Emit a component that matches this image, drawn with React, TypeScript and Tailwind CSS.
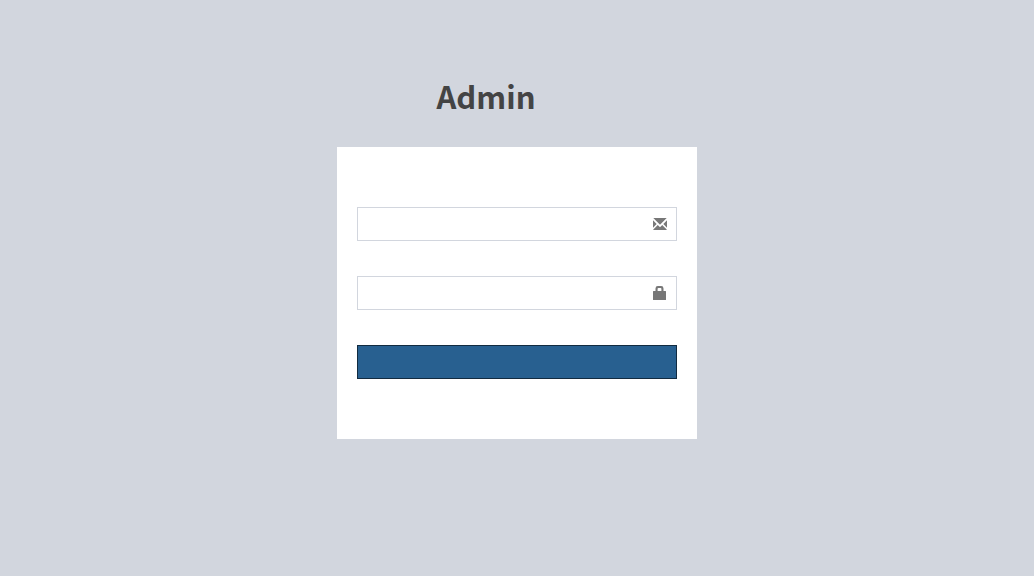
export default function App() {
  return (
    <main className="min-h-screen overflow-hidden bg-[#d2d6de] pt-[71px] font-['Noto_Sans_CJK_SC','Noto_Sans',sans-serif] text-[#444444]">
      <div className="mx-auto w-[360px] max-w-full">
        <h1 className="mb-[27px] w-[298px] text-center text-[31px] leading-[49px] font-bold">Admin</h1>
        <form className="bg-white px-5 py-[60px]" onSubmit={(e) => e.preventDefault()}>
          <div className="relative mb-[35px]">
            <input type="email" aria-label="Email" className="block h-[34px] w-full border border-[#d2d6de] bg-white pr-11 pl-3 text-sm outline-none" />
            <svg aria-hidden="true" viewBox="0 0 14 12" className="pointer-events-none absolute top-[11px] right-[10px] h-3 w-[14px] fill-[#777777]">
              <path d="M.3 0h13.4L7 6.7zM0 2.3 3.7 6 0 9.7zM14 2.3v7.4L10.3 6zM4.8 7.1 7 9.3l2.2-2.2 4.5 4.5V12H.3v-.4z" />
            </svg>
          </div>
          <div className="relative mb-[35px]">
            <input type="password" aria-label="Password" className="block h-[34px] w-full border border-[#d2d6de] bg-white pr-11 pl-3 text-sm outline-none" />
            <svg aria-hidden="true" viewBox="0 0 14 14" className="pointer-events-none absolute top-[10px] right-[10px] size-[14px] fill-[#777777]">
              <path fillRule="evenodd" d="M.5 5h2V2.4Q2.5 0 4.9 0h3.2q2.4 0 2.4 2.4V5h2q.5 0 .5.5v8q0 .5-.5.5H.5q-.5 0-.5-.5v-8Q0 5 .5 5M4.6 5h3.8V2.8Q8.4 2 7.6 2H5.4q-.8 0-.8.8z" />
            </svg>
          </div>
          <button type="submit" aria-label="Sign in" className="block h-[34px] w-full border border-[#122b40] bg-[#286090]" />
        </form>
      </div>
    </main>
  );
}
